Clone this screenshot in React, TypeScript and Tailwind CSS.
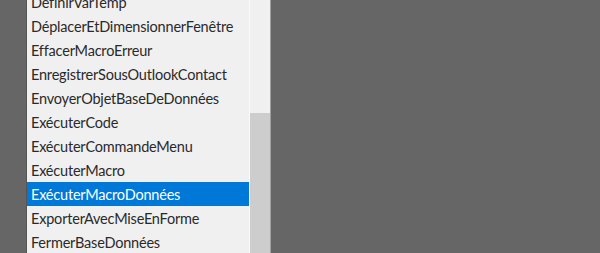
import React from "react";

const items = [
  "DéfinirVarTemp",
  "DéplacerEtDimensionnerFenêtre",
  "EffacerMacroErreur",
  "EnregistrerSousOutlookContact",
  "EnvoyerObjetBaseDeDonnées",
  "ExécuterCode",
  "ExécuterCommandeMenu",
  "ExécuterMacro",
  "ExécuterMacroDonnées",
  "ExporterAvecMiseEnForme",
  "FermerBaseDonnées",
];

export default function App() {
  return (
    <div className="w-[600px] h-[253px] bg-[#666666] flex overflow-hidden">
      <div className="ml-[26px] w-px bg-[#555555]" />
      <div className="w-[222px] bg-[#f0f0f0] overflow-hidden">
        <div className="-mt-[10px] flex flex-col">
          {items.map((t, i) => (
            <div
              key={t}
              className={
                "h-[24px] shrink-0 flex items-center pl-[4px] pt-px text-[14.5px] tracking-[-0.2px] whitespace-nowrap " +
                (i === 8 ? "bg-[#0078d7] text-white" : "text-[#2a2a2a]")
              }
              style={{ fontFamily: 'Lato, "Open Sans", sans-serif' }}
            >
              {t}
            </div>
          ))}
        </div>
      </div>
      <div className="w-px bg-[#fafafa]" />
      <div className="w-[20px] bg-[#f0f0f0] flex flex-col">
        <div className="h-[113px] shrink-0" />
        <div className="flex-1 bg-[#cdcdcd]" />
      </div>
      <div className="w-px bg-[#a0a0a0]" />
    </div>
  );
}
